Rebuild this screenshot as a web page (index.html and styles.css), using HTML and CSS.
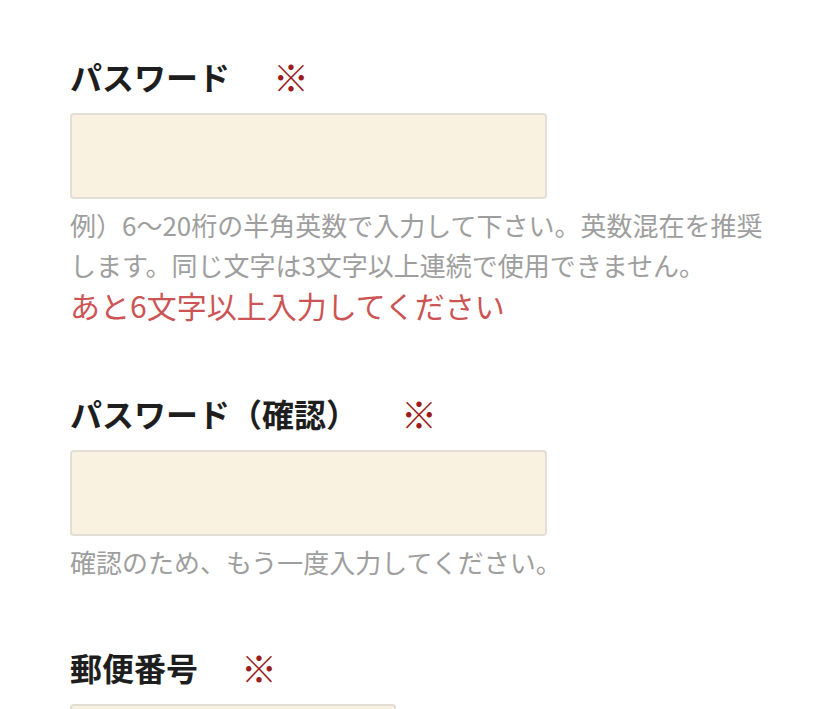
FILE: index.html
```html
<!DOCTYPE html>
<html lang="ja">
<head>
<meta charset="utf-8">
<title>パスワード設定</title>
<link rel="stylesheet" href="styles.css">
</head>
<body>
<form class="form">
  <div class="field">
    <div class="label">パスワード<span class="req">※</span></div>
    <input class="input" type="password">
    <p class="help">例）6〜20桁の半角英数で入力して下さい。英数混在を推奨します。同じ文字は3文字以上連続で使用できません。</p>
    <p class="error">あと6文字以上入力してください</p>
  </div>
  <div class="field field-tight">
    <div class="label">パスワード（確認）<span class="req">※</span></div>
    <input class="input" type="password">
    <p class="help">確認のため、もう一度入力してください。</p>
  </div>
  <div class="field">
    <div class="label">郵便番号<span class="req">※</span></div>
    <input class="input input-short" type="text">
  </div>
</form>
</body>
</html>
```

FILE: styles.css
```css
html, body {
  margin: 0;
  padding: 0;
  background: #ffffff;
}
body {
  font-family: "Noto Sans CJK JP", "Noto Sans", sans-serif;
  overflow: hidden;
}
.form {
  padding: 56px 0 0 70px;
  width: 700px;
}
.field {
  margin-bottom: 68px;
}
.field-tight {
  margin-bottom: 65px;
}
.label {
  font-size: 32px;
  line-height: 40px;
  font-weight: 700;
  color: #1e1e1e;
  margin-bottom: 17px;
}
.req {
  font-size: 36px;
  line-height: 40px;
  font-weight: 400;
  color: #9a1c1c;
  margin-left: 43px;
  vertical-align: top;
}
.input {
  display: block;
  box-sizing: border-box;
  width: 477px;
  height: 86px;
  margin: 0;
  background: #faf2e1;
  border: 2px solid #e2ded6;
  border-radius: 4px;
  outline: none;
}
.input-short {
  width: 326px;
}
.help {
  margin: 6px 0 0;
  font-size: 26px;
  line-height: 40px;
  color: #9e9e9e;
}
.error {
  margin: 0;
  font-size: 30px;
  line-height: 40px;
  color: #cc5454;
}
```
